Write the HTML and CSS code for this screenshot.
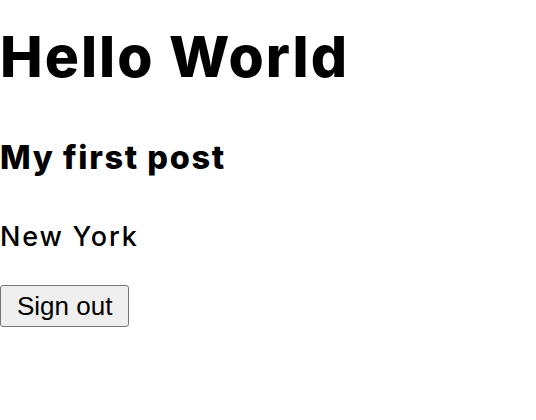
FILE: index.html
```html
<!DOCTYPE html>
<html>
<head>
<meta charset="utf-8">
<link rel="stylesheet" href="styles.css">
</head>
<body>
<main class="page">
  <h1 class="title">Hello World</h1>
  <h2 class="post">My first post</h2>
  <p class="city">New York</p>
  <button class="signout">Sign out</button>
</main>
</body>
</html>
```
FILE: styles.css
```css
html, body {
  margin: 0;
  padding: 0;
  background: #ffffff;
}
.page {
  display: flex;
  flex-direction: column;
  align-items: flex-start;
  font-family: Inter, "Liberation Sans", Arial, sans-serif;
  color: #000;
}
.title {
  margin: 24px 0 0 0;
  font-size: 57px;
  line-height: 66px;
  font-weight: 800;
  letter-spacing: 2px;
}
.post {
  margin: 49px 0 0 0;
  font-size: 32.5px;
  line-height: 38px;
  font-weight: 800;
  letter-spacing: 1.6px;
}
.city {
  margin: 45px 0 0 0;
  font-size: 27px;
  line-height: 30px;
  font-weight: 500;
  letter-spacing: 1.8px;
}
.signout {
  margin: 33px 0 0 0;
  height: 42px;
  padding: 0 16px;
  font-family: "Liberation Sans", Arial, sans-serif;
  font-size: 26px;
  color: #000;
  background: #efefef;
  border: 1px solid #767676;
  border-radius: 3px;
}
```
